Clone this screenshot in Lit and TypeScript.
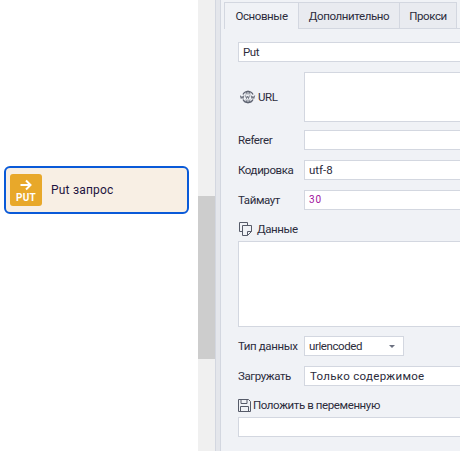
import { LitElement, html, css } from 'lit';
import { customElement } from 'lit/decorators.js';

@customElement('app-root')
export class AppRoot extends LitElement {
  static styles = css`
    :host {
      display: flex;
      width: 460px;
      height: 451px;
      overflow: hidden;
      background: #fff;
      font-family: 'Roboto', 'Open Sans', sans-serif;
      font-size: 11.5px;
      letter-spacing: -0.4px;
      color: #2c2c3c;
    }

    /* canvas with the single action block */
    .canvas {
      width: 198px;
      flex: none;
      padding-top: 166px;
      box-sizing: border-box;
    }
    .block {
      margin-left: 4px;
      width: 185px;
      height: 48px;
      box-sizing: border-box;
      border: 2px solid #0a5ad8;
      border-radius: 6px;
      background: #f8efe4;
      display: flex;
      align-items: center;
      padding-left: 4px;
      gap: 9px;
    }
    .block-icon {
      width: 32px;
      height: 32px;
      border-radius: 3px;
      background: #e8a82a;
      color: #fff;
      display: flex;
      flex-direction: column;
      align-items: center;
      justify-content: flex-end;
    }
    .block-icon svg { display: block; margin-bottom: 1px; }
    .block-icon span {
      font: 700 10px/12px 'Roboto', sans-serif;
      letter-spacing: 0.3px;
      margin-bottom: 2px;
    }
    .block-title {
      color: #1e1440;
      font-size: 12px;
      letter-spacing: 0.2px;
    }

    /* splitter scrollbar */
    .scroll {
      width: 17px;
      flex: none;
      background: #f0f0f0;
      padding-top: 196px;
      box-sizing: border-box;
    }
    .thumb { height: 163px; background: #cdcdcd; }
    .gutter {
      width: 6px;
      flex: none;
      box-sizing: border-box;
      background: #e4e6eb;
      border-left: 1px solid #d3d7e0;
      border-right: 1px solid #d3d7e0;
    }

    /* tabbed panel */
    .panel {
      flex: 1;
      min-width: 0;
      background: #f0f2f6;
      display: flex;
      flex-direction: column;
    }
    .tabs {
      display: flex;
      height: 29px;
      padding: 2px 0 0 3px;
      box-sizing: border-box;
    }
    .tab {
      box-sizing: border-box;
      height: 27px;
      padding-top: 6px;
      text-align: center;
      background: #e9ebf0;
      border: 1px solid #d3d7e0;
      border-left: 0;
    }
    .tab.main {
      width: 75px;
      background: #f0f2f6;
      border-left: 1px solid #d3d7e0;
      border-bottom: 0;
    }
    .tab.extra { width: 101px; }
    .tab.proxy { width: 57px; }
    .tabs-rest {
      flex: 1;
      height: 27px;
      box-sizing: border-box;
      border-bottom: 1px solid #d3d7e0;
    }

    .form {
      padding: 13px 0 0 17px;
      display: flex;
      flex-direction: column;
    }
    .field {
      box-sizing: border-box;
      height: 20px;
      background: #fff;
      border: 1px solid #d3d7e0;
      border-right: 0;
      padding-left: 4px;
      line-height: 18px;
      white-space: nowrap;
    }
    .row {
      display: grid;
      grid-template-columns: 66px 1fr;
      align-items: center;
      height: 20px;
      margin-top: 10px;
    }
    .row.url { height: 50px; margin-top: 10px; margin-bottom: -2px; }
    .row.url .field { height: 50px; }
    .row.type { margin-top: 9px; }
    .row.load { margin-top: 10px; }
    .row-label { white-space: nowrap; }
    .url-label { display: flex; align-items: center; gap: 2px; padding-left: 2px; }
    .encoding { letter-spacing: 0; }
    .timeout {
      color: #a0109c;
      font-size: 10px;
      letter-spacing: 1px;
      padding-left: 4px;
    }
    .section {
      display: flex;
      align-items: center;
      height: 20px;
      margin-top: 9px;
      gap: 5px;
    }
    .section svg { margin-left: 1px; }
    .data { height: 86px; margin-top: 2px; }
    .save { margin-top: 9px; gap: 2px; }
    .save svg { margin-left: 0; }
    .save + .field { margin-top: 2px; }
    .select {
      width: 100px;
      border-right: 1px solid #d3d7e0;
      display: flex;
      justify-content: space-between;
      align-items: center;
      padding-right: 8px;
    }
    .caret {
      width: 0;
      height: 0;
      border: 3px solid transparent;
      border-top: 3px solid #6b7080;
      border-bottom: 0;
    }
    .load .field { padding-left: 5px; letter-spacing: 0.3px; }
    svg { flex: none; }
  `;

  render() {
    return html`
      <div class="canvas">
        <div class="block">
          <div class="block-icon">
            <svg width="14" height="12" viewBox="0 0 14 12" fill="none" stroke="#fff" stroke-width="2">
              <path d="M1.500 6h10M7 1.500l4.500 4.500-4.500 4.500" />
            </svg>
            <span>PUT</span>
          </div>
          <div class="block-title">Put запрос</div>
        </div>
      </div>
      <div class="scroll"><div class="thumb"></div></div>
      <div class="gutter"></div>
      <div class="panel">
        <div class="tabs">
          <div class="tab main">Основные</div>
          <div class="tab extra">Дополнительно</div>
          <div class="tab proxy">Прокси</div>
          <div class="tabs-rest"></div>
        </div>
        <div class="form">
          <div class="field">Put</div>
          <div class="row url">
            <div class="row-label url-label">
              <svg width="16" height="14" viewBox="0 0 16 14" fill="none" stroke="#5f6472">
                <path d="M3 4.500a5.500 5.500 0 0 1 10 0M3 9.500a5.500 5.500 0 0 0 10 0" stroke-width="1.300" />
                <path d="M6 4.500C6.300 2.500 7 1.200 8 1c1 .2 1.700 1.500 2 3.500M6 9.500c.3 2 1 3.300 2 3.500 1-.2 1.700-1.500 2-3.500M8 1v3.500M8 9.500V13" stroke-width=".9" />
                <path d="M.3 5.500l.9 3 .9-2.200.9 2.200.9-3M5.600 5.500l.9 3 1-2.200 1 2.200.9-3M11.100 5.500l.9 3 .9-2.200.9 2.200.9-3" stroke-width=".9" />
              </svg>
              URL
            </div>
            <div class="field"></div>
          </div>
          <div class="row">
            <div class="row-label">Referer</div>
            <div class="field"></div>
          </div>
          <div class="row">
            <div class="row-label">Кодировка</div>
            <div class="field encoding">utf-8</div>
          </div>
          <div class="row">
            <div class="row-label">Таймаут</div>
            <div class="field timeout">30</div>
          </div>
          <div class="section">
            <svg width="13" height="14" viewBox="0 0 13 14" fill="none" stroke="#565b69">
              <path d="M8.500 3.500v-3h-8v9h3" />
              <path d="M3.500 3.500h9v6l-4 4h-5zM12.500 9.500h-4v4" />
            </svg>
            Данные
          </div>
          <div class="field data"></div>
          <div class="row type">
            <div class="row-label">Тип данных</div>
            <div class="field select">urlencoded<span class="caret"></span></div>
          </div>
          <div class="row load">
            <div class="row-label">Загружать</div>
            <div class="field">Только содержимое</div>
          </div>
          <div class="section save">
            <svg width="13" height="13" viewBox="0 0 13 13" fill="none" stroke="#565b69">
              <path d="M.5 .5h10l2 2v10h-12z" />
              <path d="M3 .5v4h6v-4M2.500 12.500v-5h8v5" />
            </svg>
            Положить в переменную
          </div>
          <div class="field"></div>
        </div>
      </div>
    `;
  }
}
